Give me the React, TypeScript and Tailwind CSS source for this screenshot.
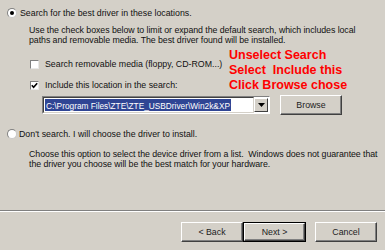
import React from "react";

function Radio(props: { checked?: boolean }) {
    return (
        <span className="w-[10px] h-[10px] shrink-0 rounded-full bg-white border border-[#808080] border-r-[#c8c8c8] border-b-[#c8c8c8] flex items-center justify-center">
            {props.checked && <span className="w-[4px] h-[4px] rounded-full bg-black"></span>}
        </span>
    );
}

function Check(props: { checked?: boolean }) {
    return (
        <span className="w-[9px] h-[9px] shrink-0 bg-white border border-[#808080] border-r-[#e8e8e8] border-b-[#e8e8e8] flex items-center justify-center">
            {props.checked && (
                <svg width="7" height="7" viewBox="0 0 7 7">
                    <polyline points="0.8,3.2 2.6,5.2 6.2,1.2" fill="none" stroke="#000" strokeWidth="1.6" />
                </svg>
            )}
        </span>
    );
}

function WinButton(props: { label: string; isDefault?: boolean }) {
    const inner = (
        <div className="w-full h-full flex items-center justify-center bg-[#d4d0c8] border border-t-white border-l-white border-r-[#404040] border-b-[#404040] shadow-[inset_-1px_-1px_0_#808080] text-[#222]">
            {props.label}
        </div>
    );
    if (props.isDefault)
        return <div className="w-[63px] h-[20px] border border-black">{inner}</div>;
    return <div className="w-[62px] h-[20px]">{inner}</div>;
}

export default function App() {
    return (
        <div className="relative w-[385px] h-[250px] bg-[#d4d0c8] flex flex-col overflow-hidden text-[8.8px] leading-[10px] text-[#111] font-['Liberation_Sans',Arial,sans-serif]">
            <div className="flex flex-col pl-[7px] pt-[8px]">
                <div className="flex items-center h-[10px] gap-[3px]">
                    <Radio checked />
                    <span>Search for the best driver in these locations.</span>
                </div>
                <p className="mt-[7px] ml-[22px] whitespace-nowrap tracking-[-0.06px]">
                    Use the check boxes below to limit or expand the default search, which includes local
                    <br />
                    paths and removable media. The best driver found will be installed.
                </p>
                <div className="flex items-center h-[10px] gap-[6px] mt-[14px] ml-[23px]">
                    <Check />
                    <span>Search removable media (floppy, CD-ROM...)</span>
                </div>
                <div className="flex items-center h-[10px] gap-[6px] mt-[11px] ml-[23px]">
                    <Check checked />
                    <span>Include this location in the search:</span>
                </div>
                <div className="flex items-center h-[20px] mt-[5px] ml-[35px]">
                    <div className="flex items-stretch w-[228px] h-[18px] bg-white border border-[#808080] border-r-white border-b-white">
                        <div className="flex-1 flex items-stretch p-[1px] border border-[#404040] border-r-[#d4d0c8] border-b-[#d4d0c8]">
                            <span className="bg-[#2f4594] text-white px-[1px] text-[8.3px] leading-[14px] whitespace-nowrap">C:\Program Files\ZTE\ZTE_USBDriver\Win2k&amp;XP</span>
                        </div>
                        <div className="w-[14px] my-[1px] mr-[1px] flex items-center justify-center bg-[#d4d0c8] border border-t-white border-l-white border-r-[#404040] border-b-[#404040]">
                            <svg width="7" height="4" viewBox="0 0 7 4">
                                <polygon points="0,0 7,0 3.5,4" fill="#000" />
                            </svg>
                        </div>
                    </div>
                    <div className="ml-[10px] w-[63px] h-[20px]">
                        <WinButton label="Browse" />
                    </div>
                </div>
                <div className="flex items-center h-[10px] gap-[2px] mt-[14px]">
                    <Radio />
                    <span>Don't search. I will choose the driver to install.</span>
                </div>
                <p className="mt-[10px] ml-[22px] whitespace-nowrap tracking-[-0.06px]">
                    Choose this option to select the device driver from a list.&nbsp; Windows does not guarantee that
                    <br />
                    the driver you choose will be the best match for your hardware.
                </p>
            </div>
            <div className="mt-auto flex flex-col">
                <div className="h-[2px] border-t border-t-[#808080] border-b border-b-white"></div>
                <div className="flex justify-end items-center mt-[10px] mb-[8px] pr-[8px]">
                    <WinButton label="< Back" />
                    <WinButton label="Next >" isDefault />
                    <div className="ml-[9px]">
                        <WinButton label="Cancel" />
                    </div>
                </div>
            </div>
            <div className="absolute left-[229px] top-[48px] text-[#ff0000] font-bold text-[12.5px] leading-[15px] whitespace-pre">
                {"Unselect Search\nSelect  Include this\nClick Browse chose"}
            </div>
        </div>
    );
}
